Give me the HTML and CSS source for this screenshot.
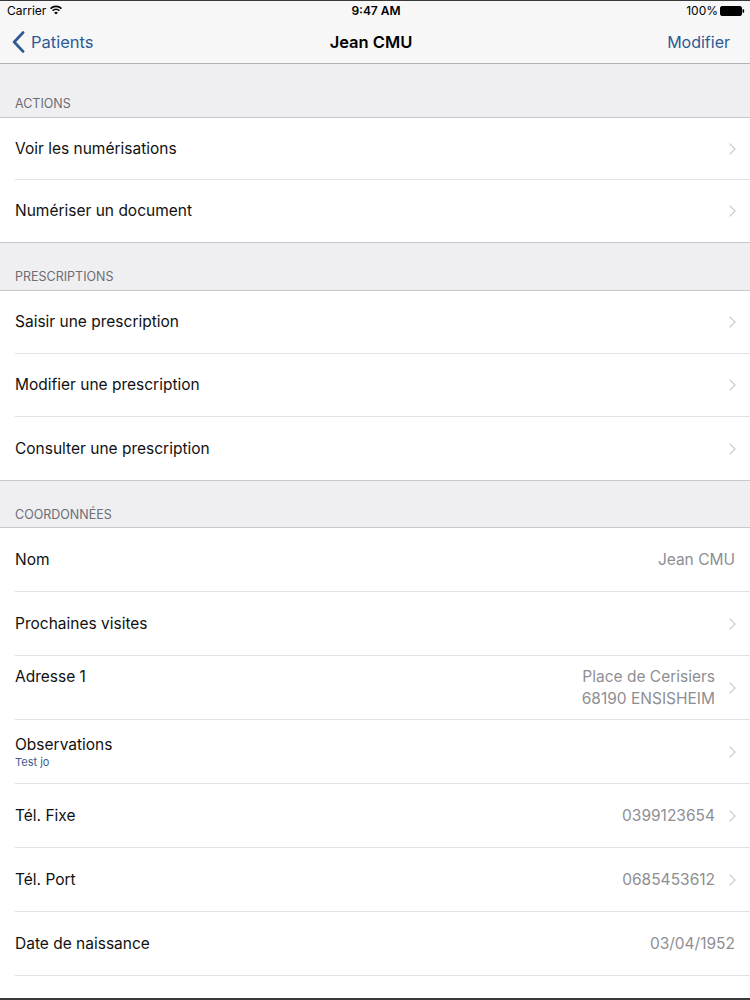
FILE: index.html
```html
<!DOCTYPE html>
<html lang="fr">
<head>
<meta charset="utf-8">
<title>Jean CMU</title>
<link rel="stylesheet" href="styles.css">
</head>
<body>
<div class="screen">
  <div class="edge edge-top"></div>

  <header class="bars">
    <div class="status">
      <div class="status-left">
        <span>Carrier</span>
        <svg class="wifi" width="12" height="10" viewBox="0 0 12 10" aria-hidden="true">
          <path d="M0.5 3.6 A7.8 7.8 0 0 1 11.5 3.6" fill="none" stroke="#000" stroke-width="1.6"/>
          <path d="M2.6 5.7 A4.8 4.8 0 0 1 9.4 5.7" fill="none" stroke="#000" stroke-width="1.6"/>
          <path d="M6 9.6 L4.2 7.8 A2.5 2.5 0 0 1 7.8 7.8 Z" fill="#000"/>
        </svg>
      </div>
      <div class="status-time">9:47 AM</div>
      <div class="status-right">
        <span>100%</span>
        <svg class="battery" width="25" height="10" viewBox="0 0 25 10" aria-hidden="true">
          <rect x="0.5" y="0.5" width="21" height="9" rx="1.5" fill="#000" stroke="#000"/>
          <rect x="22.5" y="3.2" width="1.6" height="3.6" rx="0.6" fill="#000"/>
        </svg>
      </div>
    </div>

    <nav class="navbar">
      <a class="nav-back" href="#">
        <svg width="13" height="22" viewBox="0 0 13 22" aria-hidden="true">
          <path d="M11 1.6 L2.2 11 L11 20.4" fill="none" stroke="currentColor" stroke-width="2.8" stroke-linecap="round" stroke-linejoin="round"/>
        </svg>
        <span>Patients</span>
      </a>
      <h1 class="nav-title">Jean CMU</h1>
      <a class="nav-action" href="#">Modifier</a>
    </nav>
  </header>

  <main class="table">
    <section class="group group-first">
      <h2 class="group-title">ACTIONS</h2>
      <ul class="cells cells-short">
        <li class="cell"><div class="cell-body"><span class="cell-label">Voir les numérisations</span><span class="chev"></span></div></li>
        <li class="cell"><div class="cell-body"><span class="cell-label">Numériser un document</span><span class="chev"></span></div></li>
      </ul>
    </section>

    <section class="group">
      <h2 class="group-title">PRESCRIPTIONS</h2>
      <ul class="cells cells-mid">
        <li class="cell"><div class="cell-body"><span class="cell-label">Saisir une prescription</span><span class="chev"></span></div></li>
        <li class="cell"><div class="cell-body"><span class="cell-label">Modifier une prescription</span><span class="chev"></span></div></li>
        <li class="cell"><div class="cell-body"><span class="cell-label">Consulter une prescription</span><span class="chev"></span></div></li>
      </ul>
    </section>

    <section class="group group-last">
      <h2 class="group-title">COORDONNÉES</h2>
      <ul class="cells cells-tall">
        <li class="cell"><div class="cell-body"><span class="cell-label">Nom</span><span class="cell-value">Jean CMU</span></div></li>
        <li class="cell"><div class="cell-body"><span class="cell-label">Prochaines visites</span><span class="chev"></span></div></li>
        <li class="cell"><div class="cell-body cell-body-top"><span class="cell-label cell-label-top">Adresse 1</span><span class="cell-value cell-value-multi">Place de Cerisiers<br>68190 ENSISHEIM</span><span class="chev"></span></div></li>
        <li class="cell"><div class="cell-body"><span class="cell-stack"><span class="cell-label">Observations</span><span class="cell-sub">Test jo</span></span><span class="chev"></span></div></li>
        <li class="cell"><div class="cell-body"><span class="cell-label">Tél. Fixe</span><span class="cell-value">0399123654</span><span class="chev"></span></div></li>
        <li class="cell"><div class="cell-body"><span class="cell-label">Tél. Port</span><span class="cell-value">0685453612</span><span class="chev"></span></div></li>
        <li class="cell"><div class="cell-body"><span class="cell-label">Date de naissance</span><span class="cell-value">03/04/1952</span></div></li>
      </ul>
      <div class="table-tail"></div>
    </section>
  </main>

  <div class="edge edge-bottom"></div>
</div>
</body>
</html>
```

FILE: styles.css
```css
* {
  box-sizing: border-box;
}

html,
body {
  margin: 0;
  padding: 0;
}

body {
  font-family: Inter, "Noto Sans", "DejaVu Sans", sans-serif;
  color: #111;
  background: #efeff2;
}

.screen {
  width: 750px;
  height: 1000px;
  display: flex;
  flex-direction: column;
  overflow: hidden;
  background: #efeff2;
}

/* device frame edges */
.edge {
  flex: none;
  background: #3a3a3a;
}

.edge-top {
  height: 1px;
}

.edge-bottom {
  height: 2px;
}

/* status bar + navigation bar */
.bars {
  flex: none;
  background: #f7f7f8;
  border-bottom: 1px solid #b4b4b6;
}

.status {
  height: 19px;
  display: grid;
  grid-template-columns: 1fr auto 1fr;
  align-items: center;
  font-size: 12px;
  color: #000;
  padding: 0 5px 0 7px;
}

.status-left {
  display: flex;
  align-items: center;
  gap: 4px;
}

.status-time {
  font-weight: 600;
}

.status-right {
  display: flex;
  align-items: center;
  justify-content: flex-end;
  gap: 2px;
}

.wifi {
  display: block;
  margin-top: -1px;
}

.battery {
  display: block;
}

.navbar {
  height: 43px;
  display: grid;
  grid-template-columns: 1fr auto 1fr;
  align-items: center;
  padding: 0 20px 0 12px;
}

.nav-back,
.nav-action {
  color: #2d5a94;
  text-decoration: none;
  font-size: 16.5px;
}

.nav-back {
  display: flex;
  align-items: center;
  gap: 6px;
  justify-self: start;
}

.nav-back svg {
  display: block;
}

.nav-title {
  margin: 0;
  font-size: 16.5px;
  font-weight: 600;
  color: #000;
}

.nav-action {
  justify-self: end;
  font-size: 16px;
}

/* grouped table */
.table {
  flex: 1;
  display: flex;
  flex-direction: column;
}

.group {
  display: flex;
  flex-direction: column;
}

.group-last {
  flex: 1;
}

.group-title {
  margin: 0;
  height: 47px;
  display: flex;
  align-items: flex-end;
  padding: 0 15px 6px;
  font-size: 12.5px;
  font-weight: 400;
  color: #6d6d72;
  line-height: 15px;
}

.group-first .group-title {
  height: 53px;
}

.group-last .group-title {
  height: 46px;
  padding-bottom: 5px;
}

.cells {
  list-style: none;
  margin: 0;
  padding: 0;
  background: #fff;
  border-top: 1px solid #c8c7cc;
  border-bottom: 1px solid #c8c7cc;
}

.group-last .cells {
  border-bottom: 0;
}

.cell {
  padding-left: 15px;
  background: #fff;
}

.cell-body {
  display: flex;
  align-items: center;
  gap: 12px;
  padding-right: 15px;
  border-bottom: 1px solid #e2e2e4;
  font-size: 15.5px;
  line-height: 22px;
}

.cells-short .cell-body {
  height: 62px;
}

.cells-mid .cell-body {
  height: 63px;
}

.cells-tall .cell-body {
  height: 64px;
}

.cells-short .cell:last-child .cell-body,
.cells-mid .cell:last-child .cell-body {
  border-bottom: 0;
}

.cell-label {
  flex: 1;
  color: #111;
  white-space: nowrap;
}

.cell-label-top {
  align-self: flex-start;
  padding-top: 10px;
}

.cell-value {
  color: #8e8e93;
  text-align: right;
  white-space: nowrap;
}

.cell-value-multi {
  line-height: 22px;
}

.cell-stack {
  flex: 1;
  display: flex;
  flex-direction: column;
}

.cell-stack .cell-label {
  line-height: 20px;
}

.cell-sub {
  font-size: 11px;
  line-height: 14px;
  color: #3d5d8f;
}

/* disclosure chevron */
.chev {
  flex: none;
  width: 8px;
  height: 13px;
  position: relative;
}

.chev::before {
  content: "";
  position: absolute;
  left: -1px;
  top: 2.5px;
  width: 7px;
  height: 7px;
  border-top: 1.6px solid #c4c4c8;
  border-right: 1.6px solid #c4c4c8;
  transform: rotate(45deg);
}

.table-tail {
  flex: 1;
  background: #fff;
}
```
